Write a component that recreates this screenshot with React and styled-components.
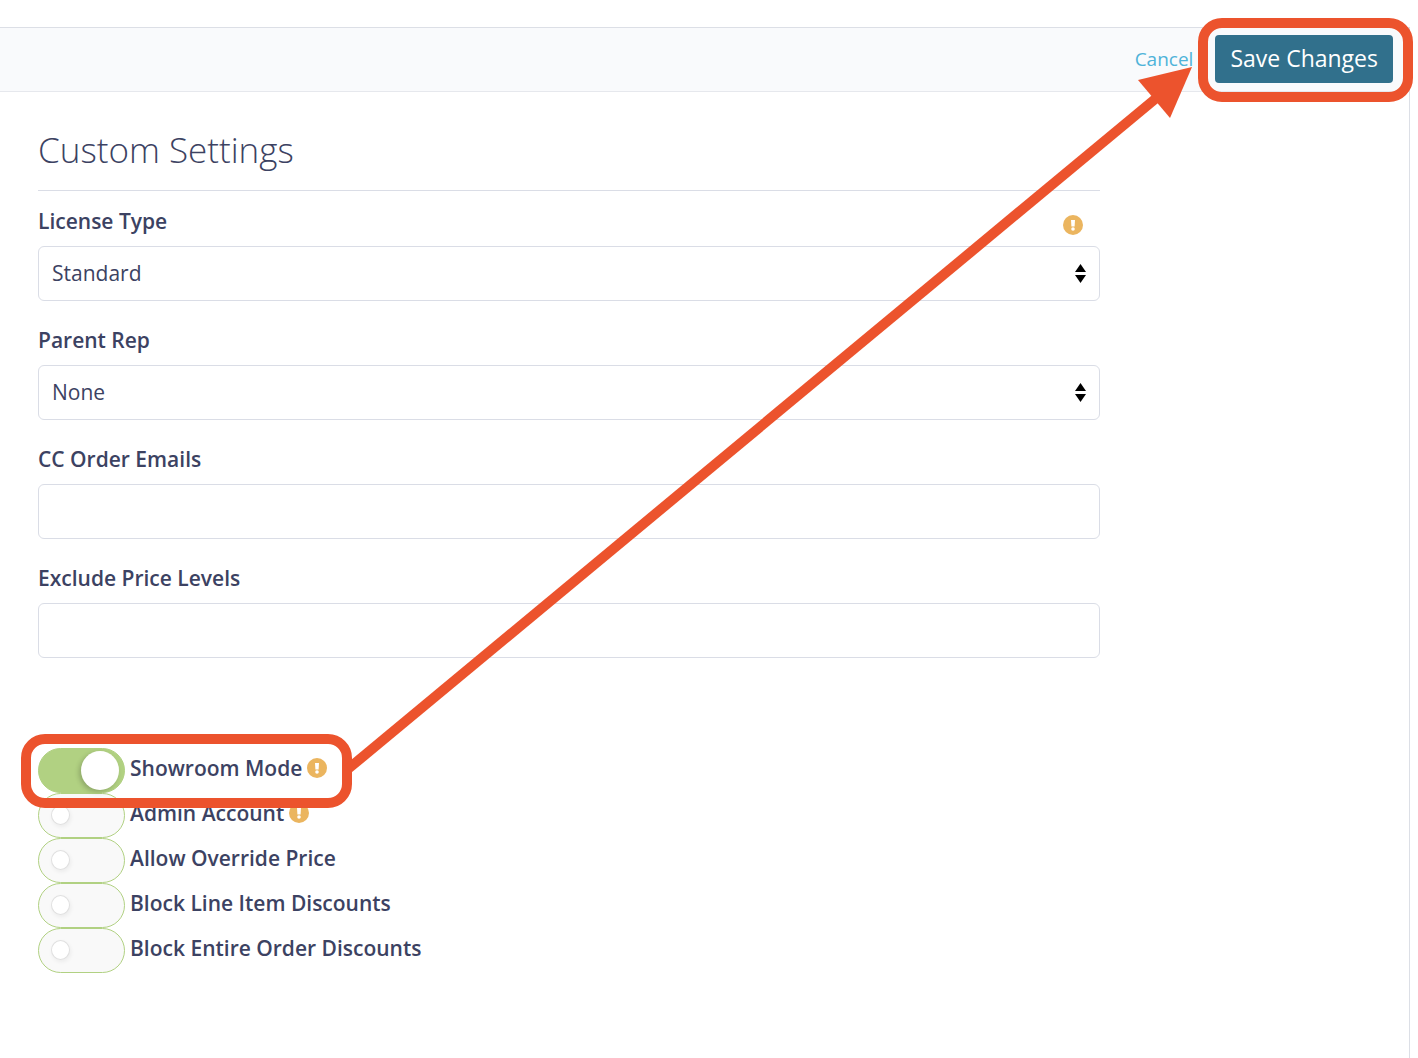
import React, { useState } from "react";
import styled, { createGlobalStyle } from "styled-components";

const GlobalStyle = createGlobalStyle`
  *, *::before, *::after { box-sizing: border-box; }
  body {
    margin: 0;
    background: #fff;
    color: #3c4262;
    font-family: "Open Sans", "Noto Sans", sans-serif;
    font-size: 21px;
  }
`;

const Page = styled.div`
  position: relative;
  min-height: 100vh;
  padding: 27px 8px 0 0;
  display: flex;
`;

const Panel = styled.main`
  flex: 1;
  border-top: 1px solid #dcdfe6;
  border-right: 1px solid #dcdfe6;
`;

const ActionBar = styled.header`
  height: 64px;
  padding: 0 16px 2px 0;
  display: flex;
  align-items: center;
  justify-content: flex-end;
  gap: 22px;
  background: #f9fafc;
  border-bottom: 1px solid #e6e8ed;
`;

const CancelLink = styled.a`
  color: #4fb3d9;
  font-size: 19px;
  line-height: 28px;
  text-decoration: none;
`;

const Highlight = styled.div`
  position: relative;
  display: flex;
  align-items: center;

  &::after {
    content: "";
    position: absolute;
    z-index: 1;
    inset: ${(p) => p.$inset};
    border: 10px solid #ec532d;
    border-radius: 24px;
    pointer-events: none;
  }
`;

const SaveButton = styled.button`
  height: 48px;
  padding: 0 15px 1px;
  border: 0;
  border-radius: 4px;
  background: #31708c;
  color: #fff;
  font: 400 23px/30px "Open Sans", "Noto Sans", sans-serif;
  cursor: pointer;
`;

const Form = styled.form`
  padding: 34px 309px 40px 38px;
`;

const Title = styled.h1`
  margin: 0 0 16px;
  padding-bottom: 16px;
  border-bottom: 1px solid #dadde6;
  font-size: 35px;
  font-weight: 300;
  line-height: 48px;
`;

const Field = styled.div`
  margin-bottom: 25px;
`;

const FieldHead = styled.div`
  display: flex;
  align-items: flex-end;
  justify-content: space-between;
  height: 28px;
  margin-bottom: 11px;
  padding-right: 17px;
`;

const Label = styled.label`
  font-size: 21px;
  font-weight: 600;
  line-height: 28px;
`;

const controlStyle = `
  display: block;
  width: 100%;
  height: 55px;
  padding: 0 13px;
  border: 1px solid #dadde6;
  border-radius: 6px;
  background: #fff;
  color: #3c4262;
  font: 400 21px/28px "Open Sans", "Noto Sans", sans-serif;
`;

const TextBox = styled.input`
  ${controlStyle}
`;

const SelectWrap = styled.div`
  position: relative;
`;

const Select = styled.select`
  ${controlStyle}
  padding-bottom: 2px;
  appearance: none;
`;

const SelectArrows = styled.svg`
  position: absolute;
  top: 18px;
  right: 13px;
  pointer-events: none;
`;

const ToggleList = styled.div`
  margin-top: 90px;
  display: flex;
  flex-direction: column;
  align-items: flex-start;
`;

const ToggleRow = styled.div`
  display: flex;
  align-items: center;
  gap: 5px;
  height: 45px;
`;

const ToggleCaption = styled.div`
  display: flex;
  align-items: center;
  gap: 5px;
  padding-bottom: 6px;
`;

const Switch = styled.input.attrs({ type: "checkbox" })`
  appearance: none;
  display: flex;
  align-items: center;
  width: 87px;
  height: 45px;
  margin: 0;
  padding: 0 12px 2px;
  border: 1px solid #b1d182;
  border-radius: 23px;
  background: #f9f9f9;
  cursor: pointer;

  &::before {
    content: "";
    width: 19px;
    height: 20px;
    border: 1px solid #e0e0e0;
    border-radius: 50%;
    background: #fff;
    box-shadow: 1px 2px 4px rgba(0, 0, 0, 0.06);
  }

  &:checked {
    justify-content: flex-end;
    padding: 0 5px;
    background: #b1d182;
  }

  &:checked::before {
    width: 38px;
    height: 39px;
    border: 0;
    box-shadow: -2px 2px 5px rgba(0, 0, 0, 0.2);
  }
`;

const Arrow = styled.svg`
  position: absolute;
  z-index: 2;
  top: 0;
  left: 0;
  pointer-events: none;
`;

const NoticeSvg = styled.svg`
  flex: none;
`;

function NoticeIcon() {
  return (
    <NoticeSvg width="20" height="20" viewBox="0 0 20 20" aria-hidden="true">
      <circle cx="10" cy="10" r="10" fill="#ebb55f" />
      <path d="M8 5h4l-.4 6.5H8.4z" fill="#fff" />
      <circle cx="10" cy="14" r="1.8" fill="#fff" />
    </NoticeSvg>
  );
}

function SelectField({ id, label, option, notice }) {
  return (
    <Field>
      <FieldHead>
        <Label htmlFor={id}>{label}</Label>
        {notice && <NoticeIcon />}
      </FieldHead>
      <SelectWrap>
        <Select id={id}>
          <option>{option}</option>
        </Select>
        <SelectArrows width="12" height="19" viewBox="0 0 12 19" aria-hidden="true">
          <path d="M5.5 0L11 8H0zM5.5 19L11 11H0z" fill="#000" />
        </SelectArrows>
      </SelectWrap>
    </Field>
  );
}

function TextField({ id, label }) {
  return (
    <Field>
      <FieldHead>
        <Label htmlFor={id}>{label}</Label>
      </FieldHead>
      <TextBox id={id} type="text" />
    </Field>
  );
}

function Toggle({ id, label, notice, defaultOn = false }) {
  const [on, setOn] = useState(defaultOn);
  return (
    <ToggleRow>
      <Switch id={id} checked={on} onChange={(e) => setOn(e.target.checked)} />
      <ToggleCaption>
        <Label htmlFor={id}>{label}</Label>
        {notice && <NoticeIcon />}
      </ToggleCaption>
    </ToggleRow>
  );
}

export default function App() {
  return (
    <>
      <GlobalStyle />
      <Page>
        <Panel>
          <ActionBar>
            <CancelLink href="#cancel">Cancel</CancelLink>
            <Highlight $inset="-17px -20px -19px -17px">
              <SaveButton type="submit" form="settings">Save Changes</SaveButton>
            </Highlight>
          </ActionBar>
          <Form id="settings" onSubmit={(e) => e.preventDefault()}>
            <Title>Custom Settings</Title>
            <SelectField id="license" label="License Type" option="Standard" notice />
            <SelectField id="parent" label="Parent Rep" option="None" />
            <TextField id="emails" label="CC Order Emails" />
            <TextField id="levels" label="Exclude Price Levels" />
            <ToggleList>
              <Highlight $inset="-14px -25px -15px -17px">
                <Toggle id="showroom" label="Showroom Mode" notice defaultOn />
              </Highlight>
              <Toggle id="admin" label="Admin Account" notice />
              <Toggle id="override" label="Allow Override Price" />
              <Toggle id="line-item" label="Block Line Item Discounts" />
              <Toggle id="entire-order" label="Block Entire Order Discounts" />
            </ToggleList>
          </Form>
        </Panel>
        <Arrow width="1200" height="780" viewBox="0 0 1200 780" aria-hidden="true">
          <path d="M348 769L1160 95" stroke="#ec532d" strokeWidth="10" />
          <path d="M1192 67L1138 80L1170 118z" fill="#ec532d" />
        </Arrow>
      </Page>
    </>
  );
}
